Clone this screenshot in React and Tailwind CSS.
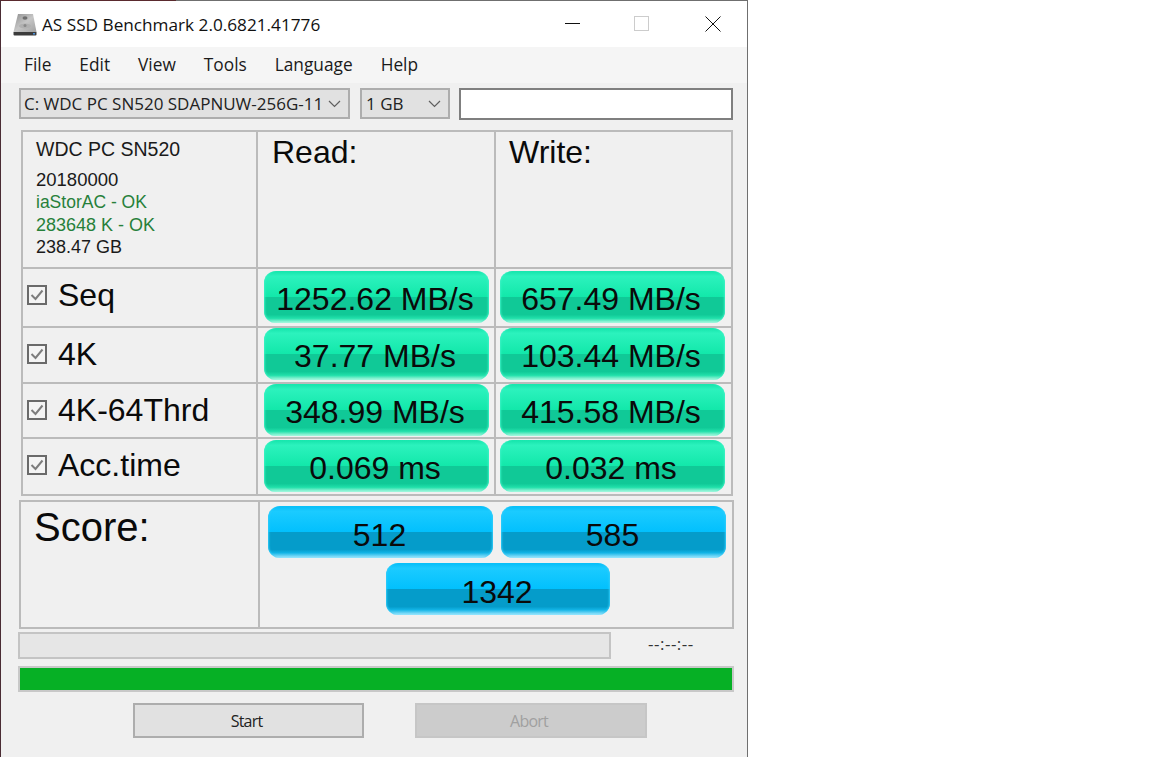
import React from "react";

const sans = "font-['Liberation_Sans',Arial,sans-serif]";
const ui = "font-['Open_Sans','Noto_Sans',sans-serif]";

function DriveIcon() {
  return (
    <svg width="24" height="23" viewBox="0 0 24 23" className="shrink-0">
      <defs>
        <linearGradient id="dg" x1="0" y1="0" x2="1" y2="1">
          <stop offset="0" stopColor="#8e8e8e" />
          <stop offset="0.5" stopColor="#c6c6c6" />
          <stop offset="1" stopColor="#a2a2a2" />
        </linearGradient>
      </defs>
      <path d="M5 1 H20 L23.500 19 H0.500 Z" fill="url(#dg)" />
      <path d="M0.500 19 H23.500 V21.500 Q23.500 22.500 22.500 22.500 H1.500 Q0.500 22.500 0.500 21.500 Z" fill="#3c3c3c" />
      <rect x="20" y="20" width="2" height="1.500" fill="#4a90d9" />
      <ellipse cx="12" cy="5" rx="2.500" ry="1.800" fill="#6e6e6e" />
      <ellipse cx="12" cy="13" rx="6" ry="2.500" fill="#b0b0b0" />
      <circle cx="12" cy="12.500" r="1.500" fill="#8a8a8a" />
    </svg>
  );
}

function Chevron() {
  return (
    <svg width="13" height="8" viewBox="0 0 13 8" className="shrink-0">
      <path d="M1 1 L6.500 6.500 L12 1" fill="none" stroke="#5f5f5f" strokeWidth="1.200" />
    </svg>
  );
}

function Check() {
  return (
    <svg width="20" height="20" viewBox="0 0 20 20" className="shrink-0">
      <rect x="1" y="1" width="18" height="18" fill="#f4f4f4" stroke="#6a6a6a" strokeWidth="2" />
      <path d="M4.500 10 L8.500 14 L15.500 5.500" fill="none" stroke="#7d7d7d" strokeWidth="2" />
    </svg>
  );
}

function Pill({ children, blue, className = "" }) {
  const bg = blue
    ? "pt-[5px] pr-[2px] shadow-[inset_2px_0_2px_-1px_#30ccfa,inset_-2px_0_2px_-1px_#30ccfa] bg-[linear-gradient(180deg,#04bdf8_0%,#1bcbff_10%,#02c0fd_50%,#059cca_50%,#059cca_84%,#12b4e6_90%,#a6e9ff_100%)]"
    : "pt-[3px] pr-[3px] shadow-[inset_2px_0_2px_-1px_#3af2c4,inset_-2px_0_2px_-1px_#3af2c4] bg-[linear-gradient(180deg,#14e4ab_0%,#2cf2bd_10%,#12e8aa_50%,#10c997_50%,#10c997_84%,#20e0aa_91%,#b6f9e4_100%)]";
  return (
    <div
      className={`h-[52px] rounded-[12px] flex items-center justify-center text-[32px] leading-none text-[#0a0a0a] ${sans} ${bg} ${className}`}
    >
      {children}
    </div>
  );
}

function Label({ children, pb }) {
  return (
    <div className={`bg-[#f0f0f0] flex items-center pl-[4px] gap-[11px] ${pb}`}>
      <Check />
      <span className={`text-[32px] leading-none text-[#0a0a0a] ${sans}`}>{children}</span>
    </div>
  );
}

const rows = [
  { name: "Seq", r: "1252.62 MB/s", w: "657.49 MB/s", pb: "pb-[5px]", pt: "pt-[2px]" },
  { name: "4K", r: "37.77 MB/s", w: "103.44 MB/s", pb: "pb-[3px]", pt: "pt-0" },
  { name: "4K-64Thrd", r: "348.99 MB/s", w: "415.58 MB/s", pb: "pb-[1px]", pt: "pt-0" },
  { name: "Acc.time", r: "0.069 ms", w: "0.032 ms", pb: "pb-[3px]", pt: "pt-[1px]" },
];

export default function App() {
  return (
    <div className="w-[748px] h-[757px] flex flex-col bg-[#f0f0f0] border-r border-r-[#6f6f6f] border-l border-l-[#4a2c34]">
      <div className="h-px shrink-0 bg-[linear-gradient(90deg,#5a2a2e_0,#5a2a2e_175px,#6f6f6f_175px,#6f6f6f_100%)]" />
      <div className={`h-[46px] shrink-0 bg-white flex items-center pl-[12px] ${ui}`}>
        <DriveIcon />
        <span className="ml-[5px] text-[17.200px] leading-none text-[#111] pt-[1px]">AS SSD Benchmark 2.0.6821.41776</span>
        <div className="ml-auto flex items-center pr-[26px] pb-[1px]">
          <svg width="15" height="15" viewBox="0 0 15 15">
            <path d="M0 7.500 H15" stroke="#111" strokeWidth="1" />
          </svg>
          <svg width="15" height="15" viewBox="0 0 15 15" className="ml-[54px]">
            <rect x="0.500" y="0.500" width="14" height="14" fill="none" stroke="#cccccc" />
          </svg>
          <svg width="16" height="16" viewBox="0 0 16 16" className="ml-[56px]">
            <path d="M0.500 0.500 L15.500 15.500 M15.500 0.500 L0.500 15.500" stroke="#111" strokeWidth="1" />
          </svg>
        </div>
      </div>

      <div className={`h-[36px] shrink-0 bg-[#f5f5f5] flex items-center gap-[28px] pl-[23px] text-[17.300px] text-[#1a1a1a] ${ui}`}>
        <span>File</span>
        <span>Edit</span>
        <span>View</span>
        <span>Tools</span>
        <span>Language</span>
        <span>Help</span>
      </div>

      <div className={`flex items-start pt-[5px] pl-[18px] h-[47px] shrink-0 text-[17px] text-[#222] ${ui}`}>
        <div className="w-[331px] h-[31px] bg-[#e1e1e1] border-2 border-[#adadad] flex items-center pl-[3px] pr-[7px]">
          <span className="w-[297px] overflow-hidden whitespace-nowrap">C: WDC PC SN520 SDAPNUW-256G-1100</span>
          <span className="ml-auto"><Chevron /></span>
        </div>
        <div className="ml-[10px] w-[90px] h-[31px] bg-[#e1e1e1] border-2 border-[#adadad] flex items-center pl-[4px] pr-[7px]">
          <span>1 GB</span>
          <span className="ml-auto"><Chevron /></span>
        </div>
        <div className="ml-[9px] w-[274px] h-[32px] bg-white border-2 border-[#7f7f7f]" />
      </div>

      <div className="ml-[20px] w-[712px] grid gap-[2px] p-[2px] bg-[#bbbbbb] grid-cols-[233px_236px_235px] grid-rows-[135px_57px_54px_53px_55px] shrink-0">
        <div className={`bg-[#f0f0f0] pl-[13px] pt-[5px] ${sans}`}>
          <div className="text-[19.500px] leading-[24px] text-[#1a1a1a]">WDC PC SN520</div>
          <div className="mt-[8px] text-[18.500px] leading-[22px] text-[#1a1a1a]">20180000</div>
          <div className="text-[17.500px] leading-[23px] text-[#27803a]">iaStorAC - OK</div>
          <div className="text-[18px] leading-[22px] text-[#27803a]">283648 K - OK</div>
          <div className="text-[18px] leading-[22px] text-[#1a1a1a]">238.47 GB</div>
        </div>
        <div className={`bg-[#f0f0f0] pl-[14px] pt-[2px] text-[32px] leading-[36px] text-[#0a0a0a] ${sans}`}>Read:</div>
        <div className={`bg-[#f0f0f0] pl-[13px] pt-[2px] text-[32px] leading-[36px] text-[#0a0a0a] ${sans}`}>Write:</div>
        {rows.map((row) => (
          <React.Fragment key={row.name}>
            <Label pb={row.pb}>{row.name}</Label>
            <div className={`bg-[#f0f0f0] pl-[6px] pr-[5px] ${row.pt}`}><Pill>{row.r}</Pill></div>
            <div className={`bg-[#f0f0f0] pl-[4px] pr-[6px] ${row.pt}`}><Pill>{row.w}</Pill></div>
          </React.Fragment>
        ))}
      </div>

      <div className="mt-[4px] ml-[18px] w-[715px] h-[129px] shrink-0 grid gap-[2px] p-[2px] bg-[#bbbbbb] grid-cols-[237px_472px]">
        <div className={`bg-[#f0f0f0] pl-[13px] pt-[2px] text-[40px] leading-[46px] text-[#0a0a0a] ${sans}`}>Score:</div>
        <div className="bg-[#f0f0f0] pl-[8px] pt-[4px] flex flex-col">
          <div className="flex gap-[8px]">
            <Pill blue className="w-[225px]">512</Pill>
            <Pill blue className="w-[225px]">585</Pill>
          </div>
          <div className="mt-[5px] ml-[118px]">
            <Pill blue className="w-[224px]">1342</Pill>
          </div>
        </div>
      </div>

      <div className="mt-[2px] ml-[17px] flex items-center h-[28px] shrink-0">
        <div className="w-[593px] h-[27px] bg-[#e6e6e6] border-2 border-[#c4c4c4]" />
        <span className={`ml-[37px] text-[17px] tracking-[0.500px] text-[#333] pb-[3px] ${ui}`}>--:--:--</span>
      </div>

      <div className="mt-[7px] ml-[17px] w-[716px] h-[26px] shrink-0 bg-[#06b025] border-2 border-[#c8c8c8]" />

      <div className={`mt-[11px] ml-[132px] flex text-[16px] ${ui}`}>
        <div className="w-[231px] h-[35px] bg-[#e1e1e1] border-2 border-[#adadad] flex items-center justify-center pr-[4px] text-[#222] tracking-[-0.800px]">Start</div>
        <div className="ml-[51px] w-[232px] h-[35px] bg-[#cccccc] border-2 border-[#c6c6c6] flex items-center justify-center pr-[4px] text-[#a0a0a0] tracking-[-0.800px]">Abort</div>
      </div>
    </div>
  );
}
